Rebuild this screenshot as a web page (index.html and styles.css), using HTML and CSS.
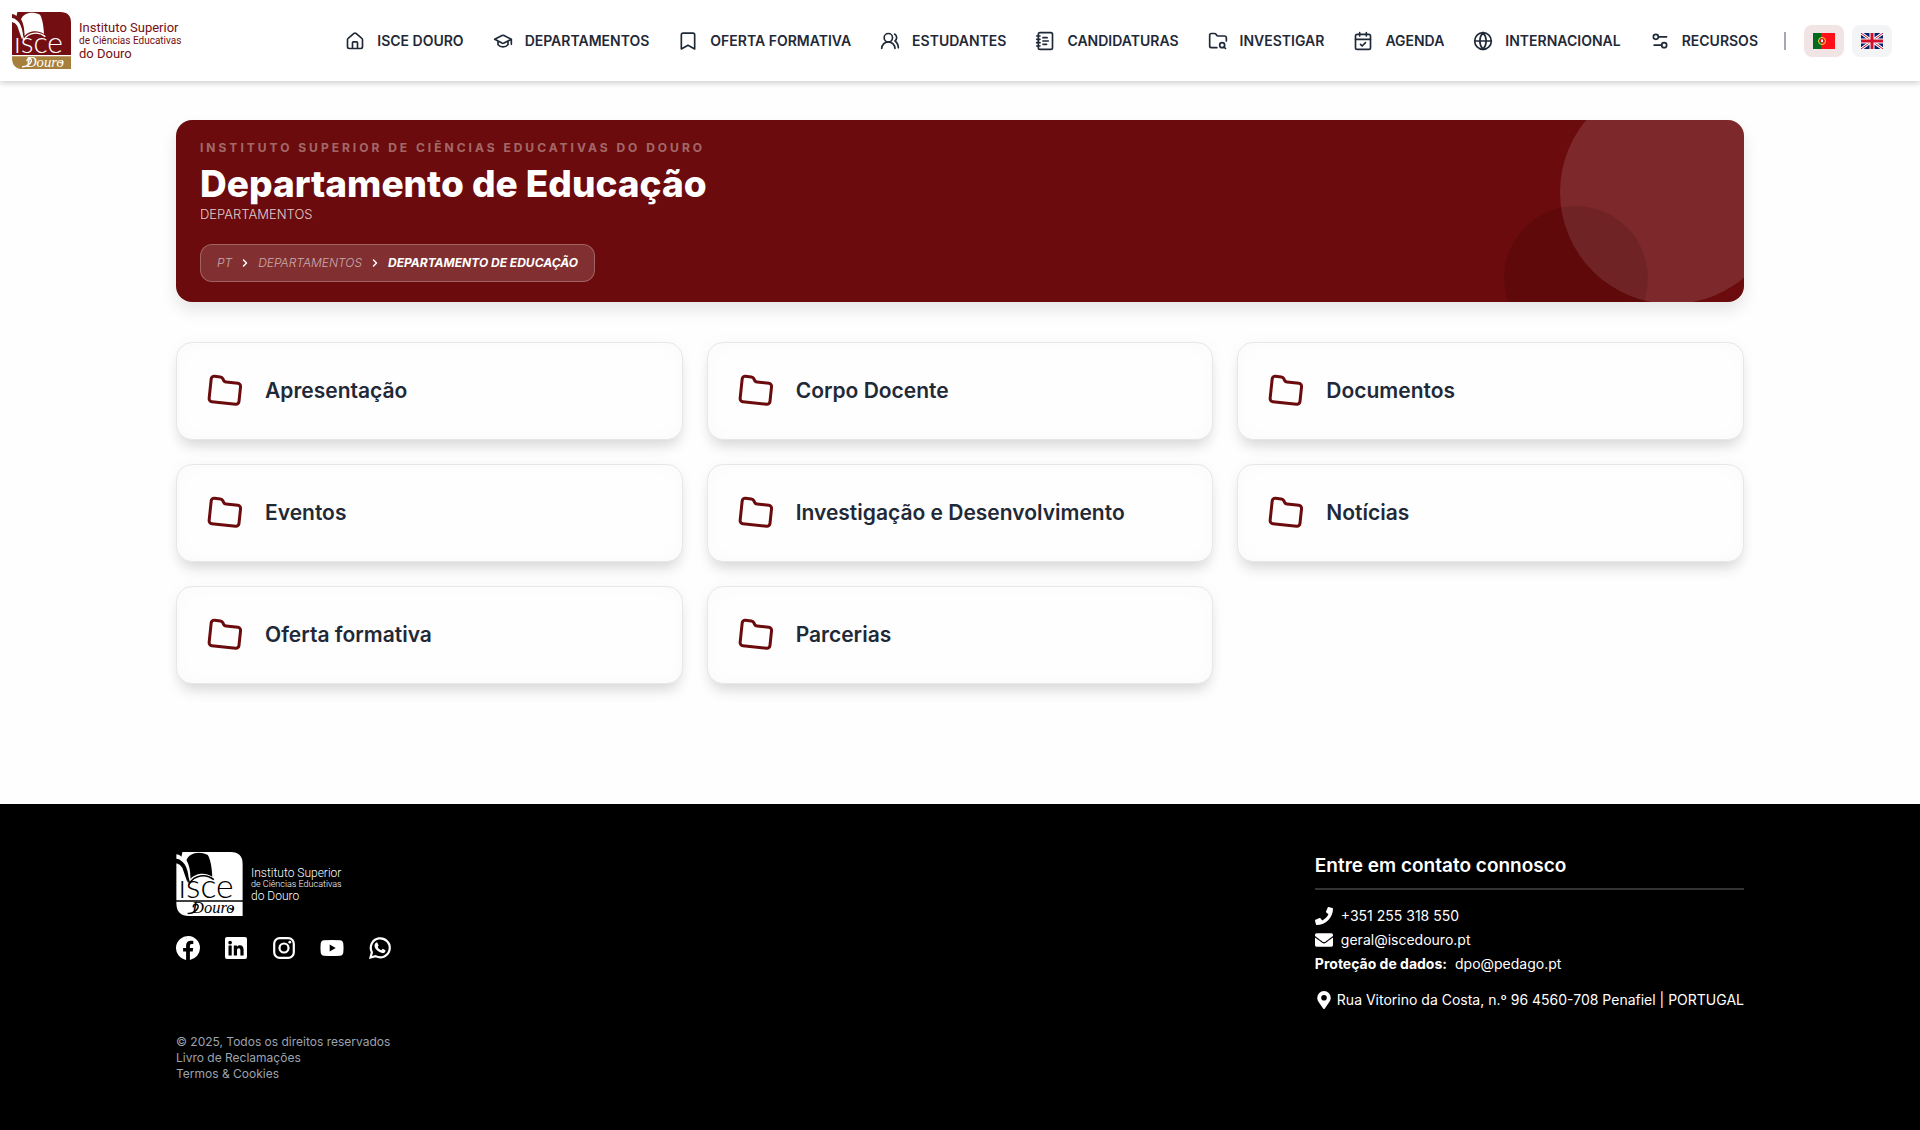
FILE: index.html
```html
<!DOCTYPE html>
<html lang="pt">
<head>
  <meta charset="UTF-8">
  <meta name="viewport" content="width=device-width, initial-scale=1.0">
  <title>Departamento de Educação - ISCE Douro</title>
  <link rel="stylesheet" href="styles.css">
</head>
<body>
  <!-- Shared icons -->
  <svg class="sprite" aria-hidden="true">
    <symbol id="i-home" viewBox="0 0 24 24"><path d="M3 10.5a2 2 0 0 1 .8-1.6l7-6a2 2 0 0 1 2.4 0l7 6a2 2 0 0 1 .8 1.6V19a2 2 0 0 1-2 2H5a2 2 0 0 1-2-2zM9 21v-7a1 1 0 0 1 1-1h4a1 1 0 0 1 1 1v7"/></symbol>
    <symbol id="i-cap" viewBox="0 0 24 24"><path d="M2 10l8.800-4.500a3 3 0 0 1 2.400 0L22 10l-8.800 4.500a3 3 0 0 1-2.400 0zM22 10v6M6 12.500v4c3 3.500 9 3.500 12 0v-4"/></symbol>
    <symbol id="i-bookmark" viewBox="0 0 24 24"><path d="M20 21.500l-8-4.500-8 4.500V4.500a2 2 0 0 1 2-2h12a2 2 0 0 1 2 2z"/></symbol>
    <symbol id="i-users" viewBox="0 0 24 24"><path d="M18 21a8 8 0 0 0-16 0M22 20c0-3.400-2-6.500-4-8a5 5 0 0 0-.5-8.300"/><circle cx="10" cy="8" r="5"/></symbol>
    <symbol id="i-notebook" viewBox="0 0 24 24"><path d="M2 6h4M2 10h4M2 14h4M2 18h4M9.500 8h5M9.500 12H16M9.500 16H14"/><rect x="4" y="2" width="17" height="20" rx="2"/></symbol>
    <symbol id="i-foldersearch" viewBox="0 0 24 24"><path d="M10.700 20H4a2 2 0 0 1-2-2V5a2 2 0 0 1 2-2h3.900a2 2 0 0 1 1.700.9l.8 1.200a2 2 0 0 0 1.700.9H20a2 2 0 0 1 2 2v4.100M21 21l-1.900-1.900"/><circle cx="17" cy="17" r="3"/></symbol>
    <symbol id="i-calendar" viewBox="0 0 24 24"><path d="M8 2v4M16 2v4M3 10h18M9 16l2 2 4-4"/><rect x="3" y="4" width="18" height="18" rx="2"/></symbol>
    <symbol id="i-globe" viewBox="0 0 24 24"><circle cx="12" cy="12" r="10"/><path d="M12 2a15 15 0 0 0 0 20 15 15 0 0 0 0-20M2 12h20"/></symbol>
    <symbol id="i-settings" viewBox="0 0 24 24"><path d="M20 7h-9M14 17H5"/><circle cx="17" cy="17" r="3"/><circle cx="7" cy="7" r="3"/></symbol>
    <symbol id="i-folder" viewBox="0 0 24 24"><path d="M20 20a2 2 0 0 0 2-2V8a2 2 0 0 0-2-2h-7.900a2 2 0 0 1-1.700-.9L9.600 3.900A2 2 0 0 0 7.900 3H4a2 2 0 0 0-2 2v13a2 2 0 0 0 2 2z"/></symbol>
    <symbol id="i-chevron" viewBox="0 0 24 24"><path d="M9 18l6-6-6-6"/></symbol>
    <symbol id="logo" viewBox="0 0 177 171">
      <path class="logo-top" d="M16 0H145Q177 0 177 32V129H0V30Q10 32 16 42Q22 60 30 82L32 62Q28 36 16 26L8 20Q14 16 16 0Z"/>
      <path class="logo-top" d="M0 6Q14 8 18 20L20 26Q10 18 0 18Z"/>
      <path class="logo-book" d="M27 22C34 4 58 -4 84 8C92 22 95 44 96 66C76 52 48 58 38 72C37 50 35 36 27 22Z"/>
      <path class="logo-line" d="M0 24C18 22 26 50 35 84C48 62 78 56 100 74"/>
      <path class="logo-band" d="M0 133H177V171H34Q0 171 0 137Z"/>
      <text class="logo-isce" x="6" y="122">ısce</text>
      <text class="logo-douro" x="42" y="164">Douro</text>
      <path class="logo-line" d="M30 164C44 166 60 152 58 144C56 136 42 140 46 148M142 150C150 156 156 150 150 146"/>
    </symbol>
  </svg>

  <header class="topbar">
    <a class="brand" href="#" aria-label="ISCE Douro">
      <svg class="brand-mark"><use href="#logo"/></svg>
      <span class="brand-text">
        <span class="brand-big">Instituto Superior</span>
        <span class="brand-small">de Ciências Educativas</span>
        <span class="brand-big">do Douro</span>
      </span>
    </a>
    <nav class="menu">
      <a href="#"><svg class="icon"><use href="#i-home"/></svg>ISCE DOURO</a>
      <a href="#"><svg class="icon"><use href="#i-cap"/></svg>DEPARTAMENTOS</a>
      <a href="#"><svg class="icon"><use href="#i-bookmark"/></svg>OFERTA FORMATIVA</a>
      <a href="#"><svg class="icon"><use href="#i-users"/></svg>ESTUDANTES</a>
      <a href="#"><svg class="icon"><use href="#i-notebook"/></svg>CANDIDATURAS</a>
      <a href="#"><svg class="icon"><use href="#i-foldersearch"/></svg>INVESTIGAR</a>
      <a href="#"><svg class="icon"><use href="#i-calendar"/></svg>AGENDA</a>
      <a href="#"><svg class="icon"><use href="#i-globe"/></svg>INTERNACIONAL</a>
      <a href="#"><svg class="icon"><use href="#i-settings"/></svg>RECURSOS</a>
    </nav>
    <div class="langs">
      <span class="divider"></span>
      <button class="lang active" type="button" aria-label="Português">
        <svg class="flag" viewBox="0 0 22 16">
          <path fill="#ff1018" d="M0 0h22v16H0z"/>
          <path fill="#006a1e" d="M0 0h8v16H0z"/>
          <circle cx="9" cy="8" r="3.500" fill="none" stroke="#f4e23c"/>
          <path fill="#fff" stroke="#e01020" d="M7.500 6h3v3q-1.500 2-3 0z"/>
        </svg>
      </button>
      <button class="lang" type="button" aria-label="English">
        <svg class="flag" viewBox="0 0 22 16">
          <path fill="#06206c" d="M0 0h22v16H0z"/>
          <path stroke="#fff" stroke-width="3" d="M0 0l22 16M22 0L0 16"/>
          <path stroke="#d0102c" d="M0 0l22 16M22 0L0 16"/>
          <path stroke="#fff" stroke-width="5" d="M11 0v16M0 8h22"/>
          <path stroke="#d0102c" stroke-width="3" d="M11 0v16M0 8h22"/>
        </svg>
      </button>
    </div>
  </header>

  <main class="container">
    <section class="hero">
      <p class="hero-label">INSTITUTO SUPERIOR DE CIÊNCIAS EDUCATIVAS DO DOURO</p>
      <h1>Departamento de Educação</h1>
      <p class="hero-sub">DEPARTAMENTOS</p>
      <nav class="crumbs" aria-label="Breadcrumb">
        <a href="#">PT</a>
        <svg class="chevron"><use href="#i-chevron"/></svg>
        <a href="#">DEPARTAMENTOS</a>
        <svg class="chevron"><use href="#i-chevron"/></svg>
        <strong>DEPARTAMENTO DE EDUCAÇÃO</strong>
      </nav>
    </section>

    <section class="cards">
      <a class="card" href="#"><span class="card-icon"><svg><use href="#i-folder"/></svg></span>Apresentação</a>
      <a class="card" href="#"><span class="card-icon"><svg><use href="#i-folder"/></svg></span>Corpo Docente</a>
      <a class="card" href="#"><span class="card-icon"><svg><use href="#i-folder"/></svg></span>Documentos</a>
      <a class="card" href="#"><span class="card-icon"><svg><use href="#i-folder"/></svg></span>Eventos</a>
      <a class="card" href="#"><span class="card-icon"><svg><use href="#i-folder"/></svg></span>Investigação e Desenvolvimento</a>
      <a class="card" href="#"><span class="card-icon"><svg><use href="#i-folder"/></svg></span>Notícias</a>
      <a class="card" href="#"><span class="card-icon"><svg><use href="#i-folder"/></svg></span>Oferta formativa</a>
      <a class="card" href="#"><span class="card-icon"><svg><use href="#i-folder"/></svg></span>Parcerias</a>
    </section>
  </main>

  <footer class="footer">
    <div class="container footer-row">
      <div>
        <a class="brand brand-light" href="#" aria-label="ISCE Douro">
          <svg class="brand-mark"><use href="#logo"/></svg>
          <span class="brand-text">
            <span class="brand-big">Instituto Superior</span>
            <span class="brand-small">de Ciências Educativas</span>
            <span class="brand-big">do Douro</span>
          </span>
        </a>
        <div class="social">
          <a href="#" aria-label="Facebook"><svg viewBox="0 0 24 24"><path d="M24 12a12 12 0 1 0-13.900 11.900v-8.400H7.100V12h3V9.400c0-3 1.800-4.700 4.600-4.700 1.300 0 2.600.2 2.600.2v3h-1.500c-1.500 0-1.900.9-1.900 1.900V12h3.300l-.5 3.500h-2.800v8.400A12 12 0 0 0 24 12z"/></svg></a>
          <a href="#" aria-label="LinkedIn"><svg viewBox="0 0 24 24"><path fill-rule="evenodd" d="M3 1h18a2 2 0 0 1 2 2v18a2 2 0 0 1-2 2H3a2 2 0 0 1-2-2V3a2 2 0 0 1 2-2zM4.500 9.500v10h3.200v-10zM6.100 4.700a1.800 1.800 0 1 0 0 3.700 1.800 1.800 0 0 0 0-3.700zM9.800 9.500v10H13v-5c0-1.400.5-2.300 1.800-2.300s1.600 1.100 1.600 2.500v4.800h3.200v-5.600c0-2.900-1.200-4.600-3.700-4.600-1.500 0-2.400.7-2.900 1.500V9.500z"/></svg></a>
          <a href="#" aria-label="Instagram"><svg viewBox="0 0 24 24"><rect x="2.200" y="2.200" width="19.600" height="19.600" rx="5.500" fill="none" stroke="#fff" stroke-width="2.200"/><circle cx="12" cy="12" r="4.500" fill="none" stroke="#fff" stroke-width="2.200"/><circle cx="17.800" cy="6.200" r="1.400"/></svg></a>
          <a href="#" aria-label="YouTube"><svg viewBox="0 0 24 24"><path fill-rule="evenodd" d="M4 4.300Q12 3.500 20 4.300 23 4.500 23.300 7.500 23.800 12 23.300 16.500 23 19.500 20 19.700 12 20.500 4 19.700 1 19.500.7 16.500.2 12 .7 7.500 1 4.500 4 4.300zM9.700 8.500v7l6-3.500z"/></svg></a>
          <a href="#" aria-label="WhatsApp"><svg viewBox="0 0 24 24"><path fill="none" stroke="#fff" stroke-width="2.200" d="M2.500 21.500l1.400-5.200a9.500 9.500 0 1 1 3.700 3.800z"/><path d="M8.200 6.500h1.100l1.300 3-.9 1.400c.9 1.700 2 2.700 3.700 3.400l1.200-1.500 2.900 1.400c0 2.200-1.500 3.200-3.300 2.900-4-.8-6.800-3.500-7.600-6.500-.3-1.700.4-3.400 1.600-4.100z"/></svg></a>
        </div>
        <div class="legal">
          <span>© 2025, Todos os direitos reservados</span>
          <a href="#">Livro de Reclamações</a>
          <a href="#">Termos &amp; Cookies</a>
        </div>
      </div>

      <address class="contact">
        <h2>Entre em contato connosco</h2>
        <a href="tel:+351255318550"><svg viewBox="0 0 512 512"><path d="M493 25L389 1c-11-3-23 3-27 14l-48 112c-4 10-1 21 7 28l61 50c-36 76-98 139-177 177l-50-61c-7-8-18-11-28-7L15 362C4 366-2 378 1 389l24 104c3 11 12 19 24 19 256 0 463-207 463-463 0-12-8-21-19-24z"/></svg>+351 255 318 550</a>
        <a href="mailto:geral@iscedouro.pt"><svg viewBox="0 0 512 512"><path d="M502 191c4-3 10 0 10 5v204c0 27-21 48-48 48H48c-27 0-48-21-48-48V196c0-5 6-8 10-5 22 17 52 40 154 114 21 15 57 48 92 48s71-33 92-48c102-74 132-97 154-114zM256 320c23 0 56-29 73-41 132-96 142-104 173-129 6-4 10-11 10-19v-19c0-27-21-48-48-48H48c-27 0-48 21-48 48v19c0 8 4 14 10 19 31 25 41 33 173 129 17 12 50 41 73 41z"/></svg>geral@iscedouro.pt</a>
        <p><strong>Proteção de dados:</strong><a href="mailto:dpo@pedago.pt">dpo@pedago.pt</a></p>
        <p class="place"><svg viewBox="0 0 512 512"><path fill-rule="evenodd" d="M236 502C91 291 64 270 64 192a192 192 0 0 1 384 0c0 78-27 99-172 310-10 13-30 13-40 0zM256 272a80 80 0 1 0 0-160 80 80 0 0 0 0 160z"/></svg>Rua Vitorino da Costa, n.º 96 4560-708 Penafiel | PORTUGAL</p>
      </address>
    </div>
  </footer>
</body>
</html>
```

FILE: styles.css
```css
* {
  box-sizing: border-box;
}
body {
  font-family: Inter, sans-serif;
  font-size: 14px;
  line-height: 24px;
  color: #1f2937;
  background: #fefefe;
  margin: 0;
  min-height: 100vh;
  display: flex;
  flex-direction: column;
}
h1, h2, p {
  margin: 0;
}
a {
  color: inherit;
  text-decoration: none;
}
.sprite {
  display: none;
}
.container {
  width: 100%;
  max-width: 1600px;
  margin: 0 auto;
  padding: 0 16px;
}

/* Header */
.topbar {
  display: flex;
  align-items: center;
  height: 81px;
  padding: 0 28px 0 12px;
  background: #fff;
  box-shadow: 0 2px 6px rgba(0, 0, 0, 0.2);
}
.brand {
  --logo-top: #730f12;
  --logo-band: #a67f3c;
  --logo-ink: #fff;
  display: flex;
  align-items: center;
  gap: 8px;
  color: #730f12;
  font-family: Roboto, sans-serif;
}
.brand-mark {
  width: 59px;
  height: 57px;
}
.brand-text {
  display: flex;
  flex-direction: column;
  white-space: nowrap;
}
.brand-big {
  font-size: 13px;
  line-height: 14px;
}
.brand-small {
  font-size: 10px;
  line-height: 12px;
}
.logo-top {
  fill: var(--logo-top);
}
.logo-band {
  fill: var(--logo-band);
}
.logo-book {
  fill: var(--logo-ink);
}
.logo-line {
  fill: none;
  stroke: var(--logo-ink);
  stroke-width: 4;
}
.logo-isce {
  font: 300 90px Lato, sans-serif;
  fill: var(--logo-ink);
}
.logo-douro {
  font: italic 44px "Liberation Serif", serif;
  fill: var(--logo-ink);
}
.menu {
  display: flex;
  gap: 29px;
  margin-left: auto;
  font-weight: 600;
  white-space: nowrap;
}
.menu a {
  display: flex;
  align-items: center;
  gap: 12px;
}
.icon, .chevron, .card-icon svg {
  fill: none;
  stroke: currentColor;
  stroke-width: 2;
  stroke-linecap: round;
  stroke-linejoin: round;
}
.icon {
  width: 20px;
  height: 20px;
}
.langs {
  display: flex;
  align-items: center;
  gap: 8px;
  margin-left: 26px;
}
.divider {
  width: 2px;
  height: 18px;
  margin-right: 10px;
  background: #a5a8b0;
}
.lang {
  display: flex;
  align-items: center;
  justify-content: center;
  width: 40px;
  height: 32px;
  padding: 0;
  border: none;
  border-radius: 8px;
  background: #f3f4f6;
  cursor: pointer;
}
.lang.active {
  background: #f0e4e4;
}
.flag {
  width: 22px;
  height: 16px;
}

/* Hero */
.hero {
  position: relative;
  overflow: hidden;
  margin-top: 39px;
  padding: 20px 24px;
  border-radius: 16px;
  color: #fff;
  background: #6b0b0d;
  box-shadow: 0 8px 16px rgba(0, 0, 0, 0.1);
}
.hero::before, .hero::after {
  content: "";
  position: absolute;
  border-radius: 50%;
}
.hero::before {
  top: -40px;
  right: -40px;
  width: 224px;
  height: 224px;
  background: rgba(255, 255, 255, 0.12);
}
.hero::after {
  right: 96px;
  bottom: -48px;
  width: 144px;
  height: 144px;
  background: rgba(0, 0, 0, 0.1);
}
.hero-label {
  font-size: 12px;
  font-weight: 700;
  line-height: 16px;
  letter-spacing: 3px;
  color: rgba(255, 255, 255, 0.4);
}
.hero h1 {
  margin-top: 8px;
  font-size: 37px;
  font-weight: 800;
  line-height: 40px;
}
.hero-sub {
  font-size: 13px;
  font-weight: 300;
  line-height: 20px;
  color: rgba(255, 255, 255, 0.8);
}
.crumbs {
  display: inline-flex;
  align-items: center;
  gap: 7px;
  height: 38px;
  margin-top: 20px;
  padding: 0 16px;
  border: 1px solid rgba(255, 255, 255, 0.25);
  border-radius: 12px;
  background: rgba(255, 255, 255, 0.15);
  font-size: 12px;
  font-style: italic;
}
.crumbs a {
  font-weight: 300;
  color: rgba(255, 255, 255, 0.6);
}
.chevron {
  width: 12px;
  height: 12px;
  stroke-width: 3;
}

/* Cards */
.cards {
  display: grid;
  grid-template-columns: repeat(3, 1fr);
  gap: 24px;
  margin: 40px 0 120px;
}
.card {
  display: flex;
  align-items: center;
  gap: 16px;
  padding: 24px;
  border: 1px solid #e5e7eb;
  border-radius: 16px;
  background: #fefefe;
  font-size: 21px;
  font-weight: 600;
  box-shadow: 0 10px 14px -4px rgba(0, 0, 0, 0.14), 0 0 16px rgba(0, 0, 0, 0.03), inset 0 0 20px rgba(0, 0, 0, 0.02);
}
.card-icon {
  display: flex;
  align-items: center;
  justify-content: center;
  width: 48px;
  height: 48px;
  color: #6b0b0d;
}
.card-icon svg {
  width: 36px;
  height: 36px;
  transform: rotate(6deg);
}

/* Footer */
.footer {
  flex: 1;
  padding: 48px 0;
  color: #fff;
  background: #000;
}
.footer-row {
  display: flex;
  justify-content: space-between;
}
.brand-light {
  --logo-top: #fff;
  --logo-band: #fff;
  --logo-ink: #000;
  color: #fff;
}
.brand-light .brand-mark {
  width: 67px;
  height: 64px;
}
.brand-light .brand-big {
  font-size: 12px;
  font-weight: 300;
  line-height: 12px;
}
.brand-light .brand-small {
  font-size: 9px;
  font-weight: 300;
  line-height: 11px;
}
.social {
  display: flex;
  gap: 24px;
  margin-top: 20px;
}
.social svg {
  display: block;
  width: 24px;
  height: 24px;
  fill: #fff;
}
.legal {
  display: flex;
  flex-direction: column;
  margin-top: 74px;
  font-size: 12px;
  line-height: 16px;
  color: #9ca3af;
}
.contact {
  min-width: 428px;
  font-style: normal;
}
.contact h2 {
  margin-bottom: 14px;
  padding-bottom: 8px;
  border-bottom: 2px solid #333;
  font-size: 19px;
  font-weight: 600;
  line-height: 28px;
}
.contact a, .contact p {
  display: flex;
  align-items: center;
  gap: 8px;
}
.contact svg {
  width: 18px;
  height: 18px;
  fill: #fff;
}
.contact .place {
  gap: 4px;
  margin-top: 12px;
}
```
